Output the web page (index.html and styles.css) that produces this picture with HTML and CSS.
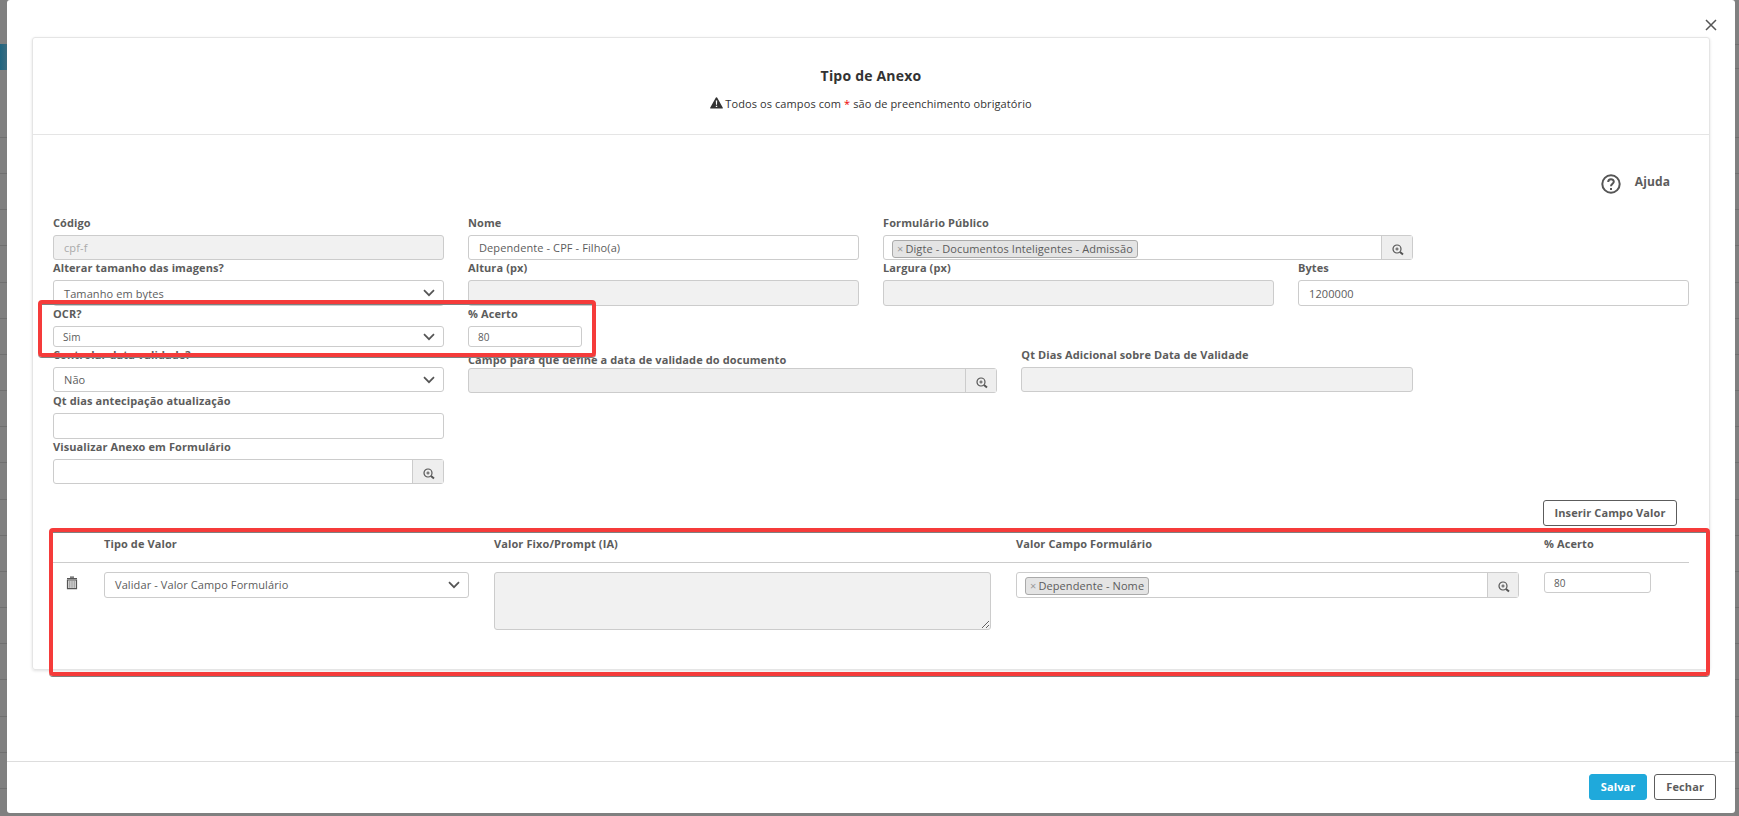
FILE: index.html
```html
<!DOCTYPE html>
<html lang="pt-BR">
<head>
  <meta charset="UTF-8">
  <meta name="viewport" content="width=device-width, initial-scale=1.0">
  <title>Tipo de Anexo</title>
  <link rel="stylesheet" href="styles.css">
</head>
<body>
  <!-- Icons -->
  <svg class="sprite" width="0" height="0">
    <symbol id="chevron" viewBox="0 0 12 8">
      <path d="M1 1.2 L6 6.2 L11 1.2" fill="none" stroke="#555" stroke-width="1.7"/>
    </symbol>
    <symbol id="search" viewBox="0 0 12 12">
      <circle cx="5" cy="5" r="4" fill="none" stroke="#555" stroke-width="1.2"/>
      <path d="M3.4 5 H6.6 M5 3.4 V6.6" stroke="#555" stroke-width="1"/>
      <path d="M8 8 L11 10.6" stroke="#555" stroke-width="2"/>
    </symbol>
  </svg>

  <!-- Page behind the modal -->
  <div class="backdrop">
    <div class="side side-left">
      <div class="side-top"></div>
      <div class="side-active"></div>
      <div class="side-space"></div>
      <div class="side-rows"></div>
    </div>
    <div class="side side-right">
      <div class="side-top"></div>
      <div class="side-bar"></div>
      <div class="side-space"></div>
      <div class="side-rows"></div>
    </div>
  </div>

  <!-- Modal -->
  <div class="modal">
    <div class="modal-header">
      <button class="close-btn" aria-label="Fechar">
        <svg width="12" height="12" viewBox="0 0 12 12"><path d="M1 1 L11 11 M11 1 L1 11" stroke="#555" stroke-width="1.5"/></svg>
      </button>
    </div>

    <div class="modal-body">
      <div class="panel">
        <div class="panel-header">
          <h2>Tipo de Anexo</h2>
          <p>
            <svg class="warn" width="13" height="12" viewBox="0 0 13 12"><path d="M6.5 0.3 C6.9 0.3 7.2 0.6 7.4 1 L12.7 10.4 C13.1 11.2 12.8 11.6 12 11.6 H1 C0.2 11.6 -0.1 11.2 0.3 10.4 L5.6 1 C5.8 0.6 6.1 0.3 6.5 0.3 Z" fill="#333"/><path d="M5.8 3.5 H7.2 L7 7.8 H6 Z M5.8 8.7 H7.2 V10.1 H5.8 Z" fill="#fff"/></svg>
            <span>Todos os campos com <b class="required">*</b> são de preenchimento obrigatório</span>
          </p>
        </div>

        <div class="help">
          <svg width="20" height="20" viewBox="0 0 20 20"><circle cx="10" cy="10" r="8.7" fill="none" stroke="#555" stroke-width="2"/><path d="M7.2 8 C7.2 4.4 12.8 4.4 12.8 7.7 C12.8 9.6 10 9.8 10 12.2" fill="none" stroke="#555" stroke-width="2"/><path d="M9 14 H11 V16 H9 Z" fill="#555"/></svg>
          <span>Ajuda</span>
        </div>

        <div class="form">
          <div class="field col-3">
            <label>Código</label>
            <input type="text" value="cpf-f" disabled>
          </div>
          <div class="field col-3">
            <label>Nome</label>
            <input type="text" value="Dependente - CPF - Filho(a)">
          </div>
          <div class="field col-4 wide">
            <label>Formulário Público</label>
            <div class="lookup">
              <div class="lookup-value"><span class="tag"><i>×</i>Digte - Documentos Inteligentes - Admissão</span></div>
              <button><svg width="12" height="12"><use href="#search"/></svg></button>
            </div>
          </div>

          <div class="field col-3 first">
            <label>Alterar tamanho das imagens?</label>
            <div class="select tall"><span>Tamanho em bytes</span><svg width="12" height="8"><use href="#chevron"/></svg></div>
          </div>
          <div class="field col-3">
            <label>Altura (px)</label>
            <input class="tall" type="text" disabled>
          </div>
          <div class="field col-3">
            <label>Largura (px)</label>
            <input class="tall" type="text" disabled>
          </div>
          <div class="field col-3">
            <label>Bytes</label>
            <input class="tall" type="text" value="1200000">
          </div>

          <div class="field col-3 first">
            <label>OCR?</label>
            <div class="select small"><span>Sim</span><svg width="12" height="8"><use href="#chevron"/></svg></div>
          </div>
          <div class="field col-1">
            <label>% Acerto</label>
            <input class="small" type="text" value="80">
          </div>

          <div class="field col-3 first">
            <label>Controlar data validade?</label>
            <div class="select"><span>Não</span><svg width="12" height="8"><use href="#chevron"/></svg></div>
          </div>
          <div class="field col-4 lower">
            <label>Campo para que define a data de validade do documento</label>
            <div class="lookup disabled">
              <div class="lookup-value"></div>
              <button><svg width="12" height="12"><use href="#search"/></svg></button>
            </div>
          </div>
          <div class="field col-3 wide">
            <label>Qt Dias Adicional sobre Data de Validade</label>
            <input type="text" disabled>
          </div>

          <div class="field col-3 first spaced">
            <label>Qt dias antecipação atualização</label>
            <input class="tall" type="text">
          </div>

          <div class="field col-3 first">
            <label>Visualizar Anexo em Formulário</label>
            <div class="lookup">
              <div class="lookup-value"></div>
              <button><svg width="12" height="12"><use href="#search"/></svg></button>
            </div>
          </div>
        </div>

        <div class="toolbar">
          <button class="btn">Inserir Campo Valor</button>
        </div>

        <div class="values values-head">
          <span></span>
          <span>Tipo de Valor</span>
          <span>Valor Fixo/Prompt (IA)</span>
          <span>Valor Campo Formulário</span>
          <span>% Acerto</span>
        </div>
        <div class="values values-row">
          <svg class="trash" width="12" height="14" viewBox="0 0 12 14"><path d="M4 1.2 H8 M1 2.6 H11" stroke="#555" stroke-width="1.3"/><path d="M1.5 4 H10.5 V12.6 H1.5 Z" fill="#ddd" stroke="#555" stroke-width="1.2"/><path d="M3.8 5 V11.8 M6 5 V11.8 M8.2 5 V11.8" stroke="#888" stroke-width="0.9"/></svg>
          <div class="select tall"><span>Validar - Valor Campo Formulário</span><svg width="12" height="8"><use href="#chevron"/></svg></div>
          <textarea disabled></textarea>
          <div class="lookup tall">
            <div class="lookup-value"><span class="tag"><i>×</i>Dependente - Nome</span></div>
            <button><svg width="12" height="12"><use href="#search"/></svg></button>
          </div>
          <input class="small" type="text" value="80">
        </div>
      </div>
    </div>

    <div class="modal-footer">
      <button class="btn btn-primary">Salvar</button>
      <button class="btn">Fechar</button>
    </div>

    <!-- Highlights -->
    <div class="highlight highlight-ocr"></div>
    <div class="highlight highlight-values"></div>
  </div>
</body>
</html>
```
FILE: styles.css
```css
:root {
  --text: #5c5c5c;
  --border: #ccc;
  --disabled-bg: #f1f1f1;
  --primary: #1fa9db;
  --red: #f53b3a;
}
* {
  box-sizing: border-box;
}
body {
  margin: 0;
  height: 816px;
  overflow: hidden;
  background: #808080;
  font-family: 'Open Sans', sans-serif;
  font-size: 11px;
  letter-spacing: 0.1px;
  color: var(--text);
}
button, input, textarea {
  font: inherit;
  letter-spacing: inherit;
  color: inherit;
}
.sprite {
  position: absolute;
}
/* Page behind the modal */
.backdrop {
  position: absolute;
  inset: 0;
  display: flex;
  justify-content: space-between;
}
.side {
  width: 7px;
  display: flex;
  flex-direction: column;
}
.side-right {
  width: 4px;
}
.side-top {
  height: 44px;
}
.side-active {
  height: 26px;
  background: linear-gradient(to right, #1f6580, #3c6c80);
}
.side-bar {
  height: 25px;
  border-top: 1px solid #707070;
  border-bottom: 1px solid #707070;
}
.side-space {
  height: 67px;
}
.side-right .side-space {
  height: 68px;
}
.side-rows {
  flex: 1;
  background: repeating-linear-gradient(to bottom, #707070 0, #707070 1px, transparent 1px, transparent 36.16px);
}
/* Modal */
.modal {
  position: relative;
  width: 1728px;
  height: 813px;
  margin-left: 7px;
  display: flex;
  flex-direction: column;
  background: #fff;
  border-radius: 3px;
}
.modal-header {
  height: 37px;
  display: flex;
  justify-content: flex-end;
  padding: 19px 18px 0 0;
}
.close-btn {
  width: 12px;
  height: 12px;
  padding: 0;
  border: none;
  background: none;
  display: flex;
}
.modal-body {
  flex: 1;
  padding: 0 25px;
}
.modal-footer {
  height: 52px;
  padding: 12px 19px 0 0;
  border-top: 1px solid #ddd;
  display: flex;
  justify-content: flex-end;
  gap: 7px;
}
/* Panel */
.panel {
  height: 633px;
  border: 1px solid #e5e5e5;
  border-radius: 3px;
  box-shadow: 0 1px 3px rgba(0,0,0,0.12);
}
.panel-header {
  height: 97px;
  padding-top: 28px;
  border-bottom: 1px solid #e5e5e5;
  color: #333;
  text-align: center;
}
.panel-header h2 {
  margin: 0;
  font-size: 14px;
  letter-spacing: 0.2px;
  line-height: 20px;
}
.panel-header p {
  margin: 9px 0 0;
  font-size: 11px;
  line-height: 18px;
  display: flex;
  justify-content: center;
  gap: 2px;
}
.warn {
  margin-top: 2px;
}
.required {
  color: #e00;
  font-weight: normal;
}
.help {
  height: 80px;
  padding: 39px 39px 0 0;
  display: flex;
  justify-content: flex-end;
  gap: 14px;
  font-size: 12px;
  font-weight: bold;
  line-height: 16px;
}
/* Form */
.form {
  padding: 0 20px;
  display: grid;
  grid-template-columns: repeat(12, 1fr);
  grid-template-rows: 45px 46px 41px 45px 47px 45px;
  column-gap: 24px;
}
.col-1 {
  grid-column-end: span 1;
}
.col-3 {
  grid-column-end: span 3;
}
.col-4 {
  grid-column-end: span 4;
}
.first {
  grid-column-start: 1;
}
.field {
  min-width: 0;
  display: flex;
  flex-direction: column;
}
.field label {
  flex: 1;
  font-weight: bold;
  line-height: 16px;
  white-space: nowrap;
}
.lower {
  padding-top: 5px;
  margin-bottom: -1px;
}
.spaced {
  padding-top: 1px;
}
.wide {
  margin-right: -1px;
}
input, .select, .lookup {
  width: 100%;
  height: 25px;
  border: 1px solid var(--border);
  border-radius: 3px;
  background: #fff;
}
input {
  padding: 0 10px;
}
input:disabled, textarea:disabled {
  background: var(--disabled-bg);
  color: #aaa;
}
.select {
  padding: 0 8px 0 10px;
  display: flex;
  align-items: center;
  justify-content: space-between;
}
.tall {
  height: 26px;
}
.small {
  height: 21px;
  font-size: 10px;
}
input.small, .select.small {
  padding-left: 9px;
}
.lookup {
  display: flex;
}
.lookup-value {
  flex: 1;
  padding: 4px 8px 0;
}
.lookup button {
  width: 31px;
  padding: 4px 0 0 1px;
  border: none;
  border-left: 1px solid var(--border);
  background: #eee;
  display: flex;
  align-items: center;
  justify-content: center;
}
.lookup.disabled {
  background: #eee;
}
.tag {
  display: inline-block;
  height: 18px;
  padding: 0 4px;
  border: 1px solid #aaa;
  border-radius: 3px;
  background: #e4e4e4;
  line-height: 16px;
  vertical-align: top;
}
.tag i {
  margin-right: 2px;
  color: #999;
  font-style: normal;
}
.toolbar {
  padding: 16px 32px 0;
  display: flex;
  justify-content: flex-end;
}
.btn {
  height: 26px;
  padding: 0 10.5px 1px;
  border: 1px solid var(--text);
  border-radius: 3px;
  background: #fff;
  font-weight: bold;
}
.btn-primary {
  border-color: var(--primary);
  background: var(--primary);
  color: #fff;
}
/* Values table */
.values {
  margin: 0 20px;
  display: grid;
  grid-template-columns: 26px 365px 497px 503px 107px;
  column-gap: 25px;
}
.values-head {
  height: 37px;
  padding-top: 10px;
  border-bottom: 1px solid var(--border);
  font-weight: bold;
  line-height: 16px;
}
.values-row {
  padding-top: 9px;
  align-items: start;
}
.values-row .select {
  padding-bottom: 1px;
}
.trash {
  margin: 4px 0 0 13px;
}
textarea {
  display: block;
  width: 100%;
  height: 58px;
  border: 1px solid var(--border);
  border-radius: 3px;
}
/* Highlights */
.highlight {
  position: absolute;
  border: 4px solid var(--red);
  border-radius: 4px;
  box-shadow: 0 1px 0 #808080, inset 0 1px 0 #808080;
}
.highlight-ocr {
  left: 31px;
  top: 300px;
  width: 558px;
  height: 57px;
}
.highlight-values {
  left: 42px;
  top: 528px;
  width: 1661px;
  height: 148px;
}
.modal-footer .btn {
  padding: 0 11px 1px;
}
```
